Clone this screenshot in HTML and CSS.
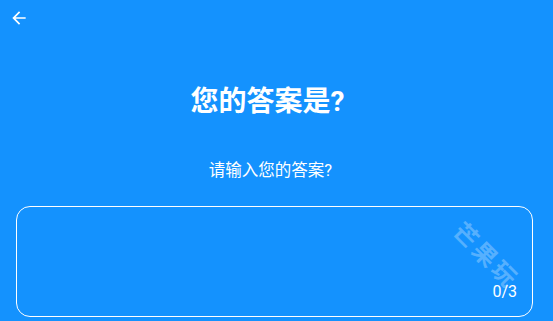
FILE: index.html
```html
<!DOCTYPE html>
<html lang="zh">
<head>
  <meta charset="UTF-8">
  <meta name="viewport" content="width=device-width, initial-scale=1.0">
  <link rel="stylesheet" href="styles.css">
  <title>您的答案是?</title>
</head>
<body>
  <header class="topbar">
    <button class="back-btn" aria-label="返回">
      <svg width="20" height="20" viewBox="0 0 24 24">
        <path d="M20 11H7.83l5.59-5.59L12 4l-8 8 8 8 1.41-1.41L7.83 13H20v-2z" fill="#fff"/>
      </svg>
    </button>
  </header>
  <main class="content">
    <h1 class="title">您的答案是?</h1>
    <p class="hint">请输入您的答案?</p>
    <div class="answer-box">
      <div class="counter">0/3</div>
      <div class="watermark">芒果玩</div>
    </div>
  </main>
</body>
</html>
```
FILE: styles.css
```css
html, body {
  margin: 0;
  padding: 0;
}

body {
  width: 553px;
  height: 321px;
  overflow: hidden;
  background-color: #1492fe;
  color: #fff;
  font-family: Roboto, "Noto Sans CJK SC", sans-serif;
}

.topbar {
  height: 36px;
  display: flex;
  align-items: center;
  padding-left: 8px;
}

.back-btn {
  background: none;
  border: none;
  padding: 0;
  width: 22px;
  height: 22px;
  display: flex;
  align-items: center;
  justify-content: center;
  cursor: pointer;
}

.content {
  padding: 0 20px 0 16px;
}

.title {
  margin: 48px 0 0 0;
  padding-right: 14px;
  text-align: center;
  font-size: 28px;
  font-weight: bold;
  line-height: 36px;
}

.hint {
  margin: 40px 0 0 0;
  padding-right: 8px;
  text-align: center;
  font-size: 16.5px;
  line-height: 22px;
}

.answer-box {
  position: relative;
  margin-top: 24px;
  height: 109px;
  border: 1px solid #fff;
  border-radius: 14px;
  overflow: hidden;
}

.counter {
  position: absolute;
  right: 15px;
  bottom: 15px;
  font-size: 16px;
  line-height: 18px;
}

.watermark {
  position: absolute;
  left: 428px;
  top: 37px;
  width: 81px;
  text-align: center;
  font-size: 24px;
  font-weight: bold;
  line-height: 24px;
  color: rgba(255, 255, 255, 0.28);
  transform: rotate(45deg);
  letter-spacing: 3px;
  white-space: nowrap;
}
```
